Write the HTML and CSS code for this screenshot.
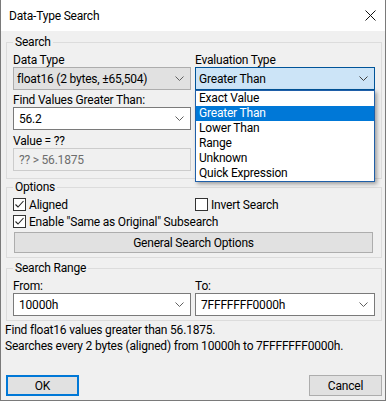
FILE: index.html
```html
<!DOCTYPE html>
<html>
<head>
  <meta charset="UTF-8">
  <title>Data-Type Search</title>
  <link rel="stylesheet" href="styles.css">
</head>
<body>
  <div class="window">
    <div class="titlebar">
      <span class="title">Data-Type Search</span>
      <svg class="close" width="11" height="11" viewBox="0 0 11 11"><path d="M0.5 0.5 L10.5 10.5 M10.5 0.5 L0.5 10.5" stroke="#111" stroke-width="1" fill="none"/></svg>
    </div>

    <div class="content">
      <fieldset class="group search">
        <legend>Search</legend>
        <div class="cols">
          <div class="col">
            <div class="label">Data Type</div>
            <div class="combo readonly">
              <span>float16 (2 bytes, ±65,504)</span>
              <svg class="arrow" width="9" height="5" viewBox="0 0 9 5"><path d="M0.5 0.5 L4.5 4.5 L8.5 0.5" stroke="#606060" fill="none"/></svg>
            </div>
            <div class="label gap">Find Values Greater Than:</div>
            <div class="combo edit">
              <span>56.2</span>
              <svg class="arrow" width="9" height="5" viewBox="0 0 9 5"><path d="M0.5 0.5 L4.5 4.5 L8.5 0.5" stroke="#606060" fill="none"/></svg>
            </div>
            <div class="label gap2">Value = ??</div>
            <div class="combo disabled"><span>?? &gt; 56.1875</span></div>
          </div>
          <div class="col">
            <div class="label">Evaluation Type</div>
            <div class="dropwrap">
              <div class="combo focused">
                <span>Greater Than</span>
                <svg class="arrow" width="9" height="5" viewBox="0 0 9 5"><path d="M0.5 0.5 L4.5 4.5 L8.5 0.5" stroke="#404040" fill="none"/></svg>
              </div>
              <ul class="droplist">
                <li>Exact Value</li>
                <li class="selected">Greater Than</li>
                <li>Lower Than</li>
                <li>Range</li>
                <li>Unknown</li>
                <li>Quick Expression</li>
              </ul>
            </div>
          </div>
        </div>
      </fieldset>

      <fieldset class="group options">
        <legend>Options</legend>
        <div class="cols">
          <label class="check"><span class="box checked"><svg width="11" height="11" viewBox="0 0 11 11"><path d="M1.5 5.5 L4 8 L9.5 2" stroke="#222" stroke-width="1.1" fill="none"/></svg></span>Aligned</label>
          <label class="check"><span class="box"></span>Invert Search</label>
        </div>
        <label class="check"><span class="box checked"><svg width="11" height="11" viewBox="0 0 11 11"><path d="M1.5 5.5 L4 8 L9.5 2" stroke="#222" stroke-width="1.1" fill="none"/></svg></span>Enable "Same as Original" Subsearch</label>
        <button class="btn wide">General Search Options</button>
      </fieldset>

      <fieldset class="group range">
        <legend>Search Range</legend>
        <div class="cols">
          <div class="col">
            <div class="label">From:</div>
            <div class="combo edit">
              <span>10000h</span>
              <svg class="arrow" width="9" height="5" viewBox="0 0 9 5"><path d="M0.5 0.5 L4.5 4.5 L8.5 0.5" stroke="#606060" fill="none"/></svg>
            </div>
          </div>
          <div class="col">
            <div class="label">To:</div>
            <div class="combo edit">
              <span>7FFFFFFF0000h</span>
              <svg class="arrow" width="9" height="5" viewBox="0 0 9 5"><path d="M0.5 0.5 L4.5 4.5 L8.5 0.5" stroke="#606060" fill="none"/></svg>
            </div>
          </div>
        </div>
      </fieldset>

      <div class="status">
        <div>Find float16 values greater than 56.1875.</div>
        <div>Searches every 2 bytes (aligned) from 10000h to 7FFFFFFF0000h.</div>
      </div>

      <div class="footer">
        <button class="btn default">OK</button>
        <button class="btn">Cancel</button>
      </div>
    </div>
  </div>
</body>
</html>
```

FILE: styles.css
```css
body { margin: 0; background: #fff; font-family: Roboto, sans-serif; font-size: 12px; letter-spacing: -0.2px; color: #000; }

.window {
  width: 386px;
  height: 401px;
  box-sizing: border-box;
  border: 1px solid #7a7a7a;
  border-top: none;
  background: #f0f0f0;
}

.titlebar {
  height: 31px;
  background: #fff;
  display: flex;
  align-items: center;
  justify-content: space-between;
  padding: 0 9px 0 8px;
}
.title { font-size: 12px; }

.content { padding: 4px 3px 0 5px; }

.group {
  margin: 0;
  padding: 5px 6px 7px;
  border: 1px solid #dcdcdc;
  min-width: 0;
}
.group legend { padding: 0 2px; line-height: 14px; }
.options { margin-top: 1px; padding: 2px 6px 4px; }
.range { margin-top: 3px; padding: 5px 6px 4px; }

.cols { display: grid; grid-template-columns: 178px 1fr; gap: 4px; }

.label { line-height: 13px; }
.label.gap { margin-top: 4px; }
.label.gap2 { margin-top: 5px; }

.combo {
  height: 23px;
  box-sizing: border-box;
  display: flex;
  align-items: center;
  justify-content: space-between;
  padding: 0 6px 0 5px;
  border: 1px solid #7a7a7a;
  background: #fff;
  white-space: nowrap;
}
.combo.readonly { background: #e1e1e1; border-color: #adadad; padding-left: 3px; }
.combo.focused { background: #cce4f7; border-color: #005499; padding-left: 3px; }
.combo.disabled { background: #f0f0f0; border-color: #cccccc; color: #6d6d6d; }

.dropwrap { position: relative; }
.droplist {
  position: absolute;
  top: 100%;
  left: 0;
  right: 0;
  margin: 0;
  padding: 0;
  list-style: none;
  background: #fff;
  border: 1px solid #1f5fa8;
  box-shadow: 2px 2px 4px rgba(0, 0, 0, 0.35);
  z-index: 2;
}
.droplist li { height: 15px; line-height: 15px; padding-left: 3px; }
.droplist li.selected { background: #0078d7; color: #fff; }

.check { display: flex; align-items: center; height: 17px; }
.box {
  width: 13px;
  height: 13px;
  box-sizing: border-box;
  border: 1px solid #333;
  background: #fff;
  margin-right: 3px;
  display: flex;
}

.btn {
  font: inherit;
  letter-spacing: inherit;
  color: #000;
  height: 21px;
  box-sizing: border-box;
  background: #e1e1e1;
  border: 1px solid #adadad;
  padding: 0;
}
.btn.wide { display: block; width: 359px; margin-top: 2px; margin-left: 1px; }

.status { line-height: 16px; margin-left: -1px; padding-top: 1px; }

.footer { display: flex; justify-content: space-between; margin-top: 21px; }
.footer .btn { width: 73px; }
.btn.default { border: 2px solid #0078d7; }
```
